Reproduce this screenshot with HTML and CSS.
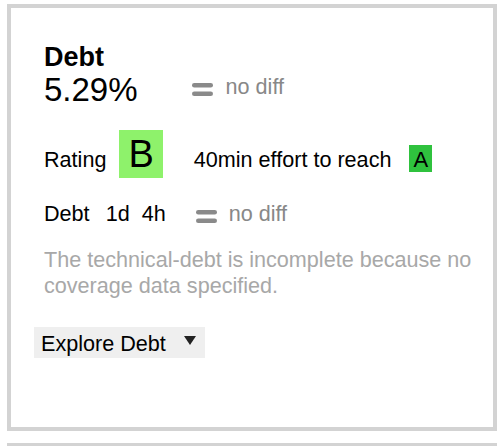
FILE: index.html
```html
<!DOCTYPE html>
<html lang="en">
<head>
<meta charset="utf-8">
<title>Debt</title>
<link rel="stylesheet" href="styles.css">
</head>
<body>
<div class="card">
  <div class="summary">
    <div class="title">Debt</div>
    <div class="value-row">
      <span class="value">5.29%</span>
      <span class="diff">
        <svg class="eq" width="21" height="13" viewBox="0 0 21 13"><rect x="0" y="0" width="21" height="4.5" rx="2.25"/><rect x="0" y="8.5" width="21" height="4.5" rx="2.25"/></svg>
        <span class="diff-text">no diff</span>
      </span>
    </div>
    <div class="rating-row">
      <span class="label">Rating</span><span class="grade grade-b">B</span><span class="effort">40min effort to reach</span><span class="grade grade-a">A</span>
    </div>
    <div class="debt-row">
      <span class="label">Debt</span>
      <span class="dur dur-d">1d</span>
      <span class="dur dur-h">4h</span>
      <span class="diff diff-small">
        <svg class="eq" width="21" height="13" viewBox="0 0 21 13"><rect x="0" y="0" width="21" height="4.5" rx="2.25"/><rect x="0" y="8.5" width="21" height="4.5" rx="2.25"/></svg>
        <span class="diff-text">no diff</span>
      </span>
    </div>
    <p class="note">The technical-debt is incomplete because no coverage data specified.</p>
  </div>
  <div class="explore"><span class="explore-text">Explore Debt</span><span class="caret"></span></div>
</div>
<div class="card card-next"></div>
</body>
</html>
```

FILE: styles.css
```css
html, body {
  margin: 0;
  padding: 0;
  background: #ffffff;
}
body {
  font-family: "Liberation Sans", Arial, sans-serif;
  color: #000;
  font-size: 21.6px;
  line-height: 26px;
  overflow: hidden;
}
.card {
  box-sizing: border-box;
  width: 490px;
  height: 427px;
  margin: 4px 0 0 7px;
  border: 4px solid #d3d3d3;
  padding: 34px 12px 0 23px;
}
.card-next {
  margin-top: 12px;
  height: 3px;
  padding: 0;
  border-width: 3px 4px 0;
}
.summary {
  padding-left: 10px;
}
.title {
  font-size: 27px;
  font-weight: bold;
  line-height: 30px;
}
.value-row {
  display: flex;
  align-items: flex-start;
  height: 36px;
}
.value {
  font-size: 33px;
  line-height: 36px;
}
.diff {
  display: flex;
  align-items: flex-start;
  margin-left: 54px;
  margin-top: 2px;
  color: #888;
}
.eq {
  fill: #8a8a8a;
  margin-top: 9px;
  margin-right: 13px;
  flex: none;
}
.diff-text {
  color: #888;
}
.rating-row {
  margin-top: 22px;
  line-height: 26px;
  white-space: nowrap;
}
.grade {
  display: inline-block;
  color: #000;
}
.grade-b {
  background: #8ef26b;
  font-size: 38px;
  line-height: 48px;
  padding: 0 9px;
  margin-left: 13px;
}
.effort {
  margin-left: 31px;
}
.grade-a {
  background: #2fc23e;
  font-size: 22px;
  line-height: 25px;
  padding: 2px 4px 0;
  margin-left: 18px;
}
.debt-row {
  display: flex;
  align-items: flex-start;
  margin-top: 23px;
}
.dur-d {
  margin-left: 16px;
}
.dur-h {
  margin-left: 12px;
}
.diff-small {
  margin-left: 30px;
  margin-top: 0;
}
.diff-small .eq {
  margin-top: 9px;
  margin-right: 12px;
}
.note {
  margin: 20px 0 0;
  color: #a8a8a8;
}
.explore {
  display: inline-flex;
  align-items: flex-start;
  background: #efefef;
  padding: 3px 9px 0 7px;
  line-height: 28px;
  margin-top: 28px;
}
.caret {
  width: 0;
  height: 0;
  border-left: 6.5px solid transparent;
  border-right: 6.5px solid transparent;
  border-top: 9px solid #222;
  margin-left: 18px;
  margin-top: 6px;
}
```
